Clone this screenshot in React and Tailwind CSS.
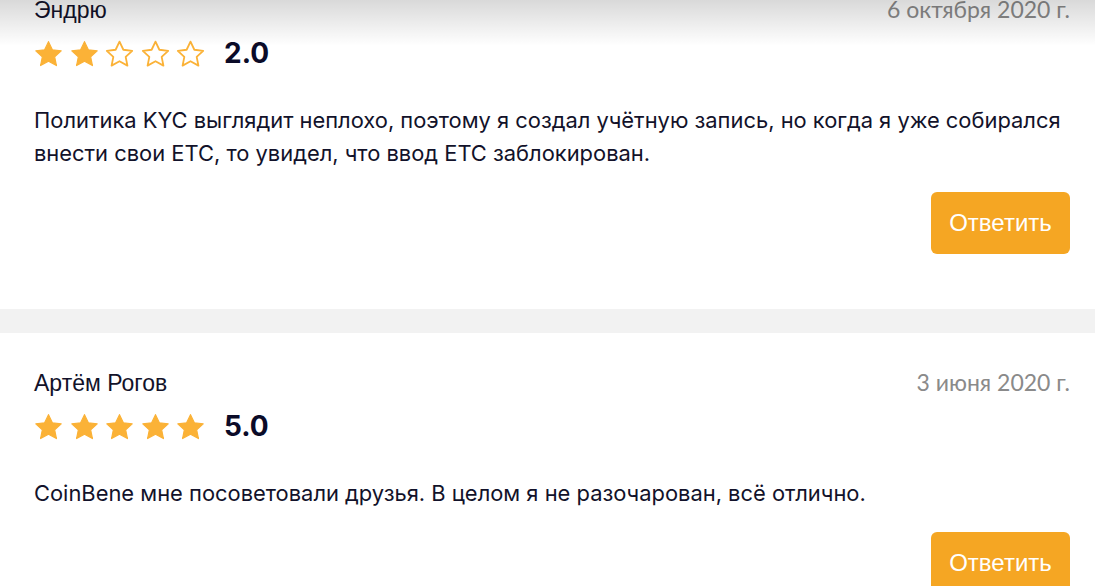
const STAR = 'M12 1.2l3.2 6.7 7.3.9-5.4 5 1.45 7.2L12 17.4 5.45 21l1.45-7.2-5.4-5 7.3-.9z'

const reviews = [
  {
    name: 'Эндрю',
    date: '6 октября 2020 г.',
    rating: 2,
    text: 'Политика KYC выглядит неплохо, поэтому я создал учётную запись, но когда я уже собирался внести свои ETC, то увидел, что ввод ETC заблокирован.',
  },
  {
    name: 'Артём Рогов',
    date: '3 июня 2020 г.',
    rating: 5,
    text: 'CoinBene мне посоветовали друзья. В целом я не разочарован, всё отлично.',
  },
]

function Stars({ value }) {
  return (
    <div className="flex items-center gap-[6.5px]">
      {[1, 2, 3, 4, 5].map((i) => (
        <svg key={i} viewBox="0 0 24 22" className="w-[29px] h-[27px]">
          <path
            d={STAR}
            fill={i <= value ? '#fbb237' : 'none'}
            stroke="#fbb237"
            strokeWidth={i <= value ? 1 : 1.5}
            strokeLinejoin="round"
          />
        </svg>
      ))}
    </div>
  )
}

function Review({ r, first }) {
  return (
    <div className={`bg-white pl-[34px] pr-[25px] pt-[35px] pb-[55px] ${first ? '-mt-[40px]' : ''}`}>
      <div className="flex items-baseline justify-between h-[28px]">
        <span className="text-[23px] leading-[28px] text-[#12122a] font-['Liberation_Sans',Arial,sans-serif]">
          {r.name}
        </span>
        <span className="text-[23px] leading-[28px] text-[#8a8a8a] font-['Lato',sans-serif]">{r.date}</span>
      </div>

      <div className="flex items-center h-[30px] mt-[15px]">
        <Stars value={r.rating} />
        <span className="ml-[19px] text-[28px] font-bold text-[#0b0b28] font-['Inter',sans-serif] leading-none">
          {r.rating.toFixed(1)}
        </span>
      </div>

      <p className="mt-[36px] text-[21.9px] leading-[33px] text-[#12122a] font-['Inter',sans-serif]">
        {r.text}
      </p>

      <div className="flex justify-end mt-[22px]">
        <button className="h-[62px] w-[139px] rounded-[6px] bg-[#f5a623] text-white text-[24px] font-['Liberation_Sans',Arial,sans-serif]">
          Ответить
        </button>
      </div>
    </div>
  )
}

export default function App() {
  return (
    <div className="relative w-[1095px] h-[586px] overflow-hidden bg-[#f2f2f2] font-['Inter',sans-serif]">
      <Review r={reviews[0]} first />
      <div className="h-[24px]" />
      <Review r={reviews[1]} />

      {/* header shadow */}
      <div className="absolute top-0 left-0 right-0 h-[46px] pointer-events-none bg-gradient-to-b from-[rgba(0,0,0,0.15)] to-transparent" />
    </div>
  )
}
